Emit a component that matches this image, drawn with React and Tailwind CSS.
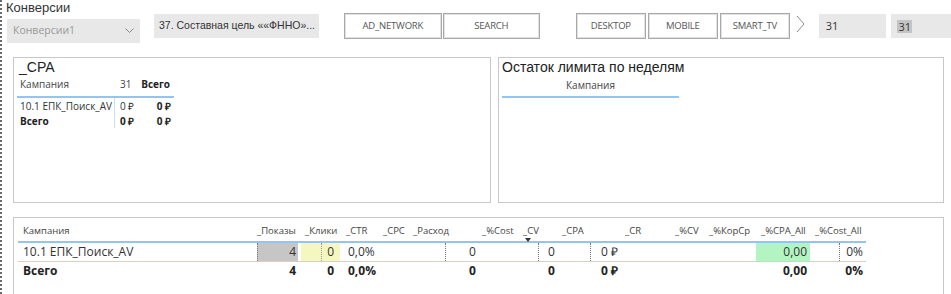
import React from "react";

const sans = { fontFamily: '"Liberation Sans", Arial, sans-serif' };

function Chevron() {
  return (
    <svg width="9" height="6" viewBox="0 0 9 6" className="block">
      <path d="M0.5 0.5 L4.5 4.5 L8.5 0.5" fill="none" stroke="#8a8a8a" strokeWidth="1" />
    </svg>
  );
}

function Btn({ w, children }) {
  return (
    <div
      className={`${w} h-[26px] border border-[#a8a8a8] shadow-[inset_0_0_0_1px_#e2e2e2] flex items-center justify-center text-[9.5px] text-[#555] font-['Open_Sans'] tracking-[-0.2px]`}
    >
      {children}
    </div>
  );
}

const dash = "border-l border-dotted border-[#777]";

export default function App() {
  return (
    <div className="relative w-[951px] h-[294px] overflow-hidden bg-white border-l-2 border-dotted border-[#6a6a6a] font-['Open_Sans'] text-[#333]">
      {/* top bar */}
      <div className="flex items-start h-[57px]">
        <div className="ml-[4px] w-[134px]">
          <div className="text-[13px] leading-[15px] text-[#333] h-[19px]" style={sans}>
            Конверсии
          </div>
          <div className="ml-[1px] w-[133px] h-[24px] bg-[#e8e8e8] flex items-center justify-between pl-[6px] pr-[6px]">
            <span className="text-[10.5px] text-[#999]">Конверсии1</span>
            <Chevron />
          </div>
        </div>
        <div
          className="ml-[14px] mt-[14px] w-[166px] h-[24px] bg-[#e8e8e8] flex items-center pl-[5px] text-[10.5px] text-[#333] whitespace-nowrap overflow-hidden"
          style={sans}
        >
          37. Составная цель ««ФННО»...
        </div>
        <div className="ml-[25px] mt-[13px] flex gap-[1px]">
          <Btn w="w-[98px]">AD_NETWORK</Btn>
          <Btn w="w-[97px]">SEARCH</Btn>
        </div>
        <div className="ml-[36px] mt-[13px] flex gap-[2px]">
          <Btn w="w-[70px]">DESKTOP</Btn>
          <Btn w="w-[70px]">MOBILE</Btn>
          <Btn w="w-[70px]">SMART_TV</Btn>
        </div>
        <div className="ml-[6px] mt-[15px]">
          <svg width="9" height="18" viewBox="0 0 9 18" className="block">
            <path d="M1 1 L8 9 L1 17" fill="none" stroke="#8a8a8a" strokeWidth="1" />
          </svg>
        </div>
        <div className="ml-[14px] mt-[14px] w-[68px] h-[24px] bg-[#e8e8e8] flex items-center pl-[7px] text-[11px] text-[#333]">
          31
        </div>
        <div className="ml-[5px] mt-[14px] w-[60px] h-[24px] bg-[#e8e8e8] flex items-center pl-[6px] text-[11px] text-[#333]">
          <span className="bg-[#c4c4c4] leading-[13px] px-[1px]">31</span>
        </div>
      </div>

      {/* middle panels */}
      <div className="flex ml-[11px] gap-[7px]">
        <div className="w-[478px] h-[146px] border border-[#c8c8c8]">
          <div className="h-[18px] pl-[5px] pt-[1px] text-[14px] leading-[16px] text-[#222]" style={sans}>
            _CPA
          </div>
          <div className="ml-[3px] w-[157px] text-[10px]">
            <div className="flex h-[22px] items-start pt-[2px] leading-[12px] border-b-2 border-[#94c4f0]">
              <div className="w-[98px] pl-[3px] text-[#444]">Кампания</div>
              <div className="w-[24px] pl-[5px] text-[#444]">31</div>
              <div className="w-[35px] text-right pr-[4px] font-bold text-[#222]">Всего</div>
            </div>
            <div className="flex h-[15px] items-center leading-[12px]">
              <div className="w-[98px] h-full flex items-center pl-[3px] border-r border-[#c9dff3] text-[#333]">10.1 ЕПК_Поиск_AV</div>
              <div className="w-[24px] pl-[5px]">0 ₽</div>
              <div className="w-[35px] text-right pr-[3px] font-bold text-[#222]">0 ₽</div>
            </div>
            <div className="flex h-[15px] items-center leading-[12px] font-bold text-[#222]">
              <div className="w-[98px] h-full flex items-center pl-[3px] border-r border-[#c9dff3]">Всего</div>
              <div className="w-[24px] pl-[5px]">0 ₽</div>
              <div className="w-[35px] text-right pr-[3px]">0 ₽</div>
            </div>
          </div>
        </div>
        <div className="w-[446px] h-[146px] border border-[#c8c8c8]">
          <div className="h-[18px] pl-[3px] pt-[1px] text-[14px] leading-[16px] text-[#222]" style={sans}>
            Остаток лимита по неделям
          </div>
          <div className="ml-[3px] w-[177px] h-[22px] pt-[3px] text-[10px] leading-[12px] text-center text-[#444] border-b-2 border-[#94c4f0]">
            Кампания
          </div>
        </div>
      </div>

      {/* bottom table */}
      <div className="ml-[11px] mt-[14px] w-[931px] h-[100px] border border-[#c8c8c8] pt-[7px]">
        <div className="ml-[4px] w-[848px]">
          <div className="flex h-[18px] text-[9.5px] leading-[12px] text-[#444] whitespace-nowrap border-b-2 border-[#94c4f0]">
            <div className="w-[239px] pl-[5px]">Кампания</div>
            <div className="w-[48px] pl-[0px]">_Показы</div>
            <div className="w-[41px]">_Клики</div>
            <div className="w-[37px]">_CTR</div>
            <div className="w-[30px]">_CPC</div>
            <div className="w-[69px]">_Расход</div>
            <div className="w-[41px]">_%Cost</div>
            <div className="w-[39px] relative">
              _CV
              <svg width="6" height="4" viewBox="0 0 6 4" className="absolute left-[2px] top-[13px]">
                <path d="M0 0 L6 0 L3 4 Z" fill="#333" />
              </svg>
            </div>
            <div className="w-[63px]">_CPA</div>
            <div className="w-[50px]">_CR</div>
            <div className="w-[34px]">_%CV</div>
            <div className="w-[52px]">_%КорСр</div>
            <div className="w-[54px]">_%CPA_All</div>
            <div className="w-[51px]">_%Cost_All</div>
          </div>
          {/* row 1 */}
          <div className="flex h-[19px] text-[12px] leading-[18px] text-[#333] border-b border-[#b9d8f4]">
            <div className="w-[239px] pl-[5px]">10.1 ЕПК_Поиск_AV</div>
            <div className={`w-[41px] bg-[#c6c6c6] text-right pr-[2px] ${dash}`}>4</div>
            <div className="w-[43px] pl-[3px] flex">
              <div className="w-[39px] bg-[#f5f7c0] flex">
                <div className="w-[21px] border-r border-dotted border-[#999]" />
                <div className="flex-1 text-right pr-[6px]">0</div>
              </div>
            </div>
            <div className="w-[104px] pl-[7px]">0,0%</div>
            <div className={`w-[93px] pl-[23px] ${dash}`}>0</div>
            <div className={`w-[52px] pl-[9px] ${dash}`}>0</div>
            <div className={`w-[166px] pl-[10px] ${dash}`}>0 ₽</div>
            <div className="w-[54px] bg-[#b3f5c2] text-right pr-[3px]">0,00</div>
            <div className="w-[56px] flex">
              <div className="w-[29px]" />
              <div className={`flex-1 text-right pr-[3px] ${dash}`}>0%</div>
            </div>
          </div>
          {/* row 2 */}
          <div className="flex h-[18px] text-[12px] leading-[18px] font-bold text-[#222]">
            <div className="w-[239px] pl-[5px]">Всего</div>
            <div className="w-[41px] text-right pr-[2px]">4</div>
            <div className="w-[43px] pl-[3px] text-right pr-[7px]">0</div>
            <div className="w-[104px] pl-[7px]">0,0%</div>
            <div className="w-[93px] pl-[24px]">0</div>
            <div className="w-[52px] pl-[10px]">0</div>
            <div className="w-[166px] pl-[11px]">0 ₽</div>
            <div className="w-[54px] text-right pr-[3px]">0,00</div>
            <div className="w-[56px] text-right pr-[3px]">0%</div>
          </div>
        </div>
      </div>
    </div>
  );
}
